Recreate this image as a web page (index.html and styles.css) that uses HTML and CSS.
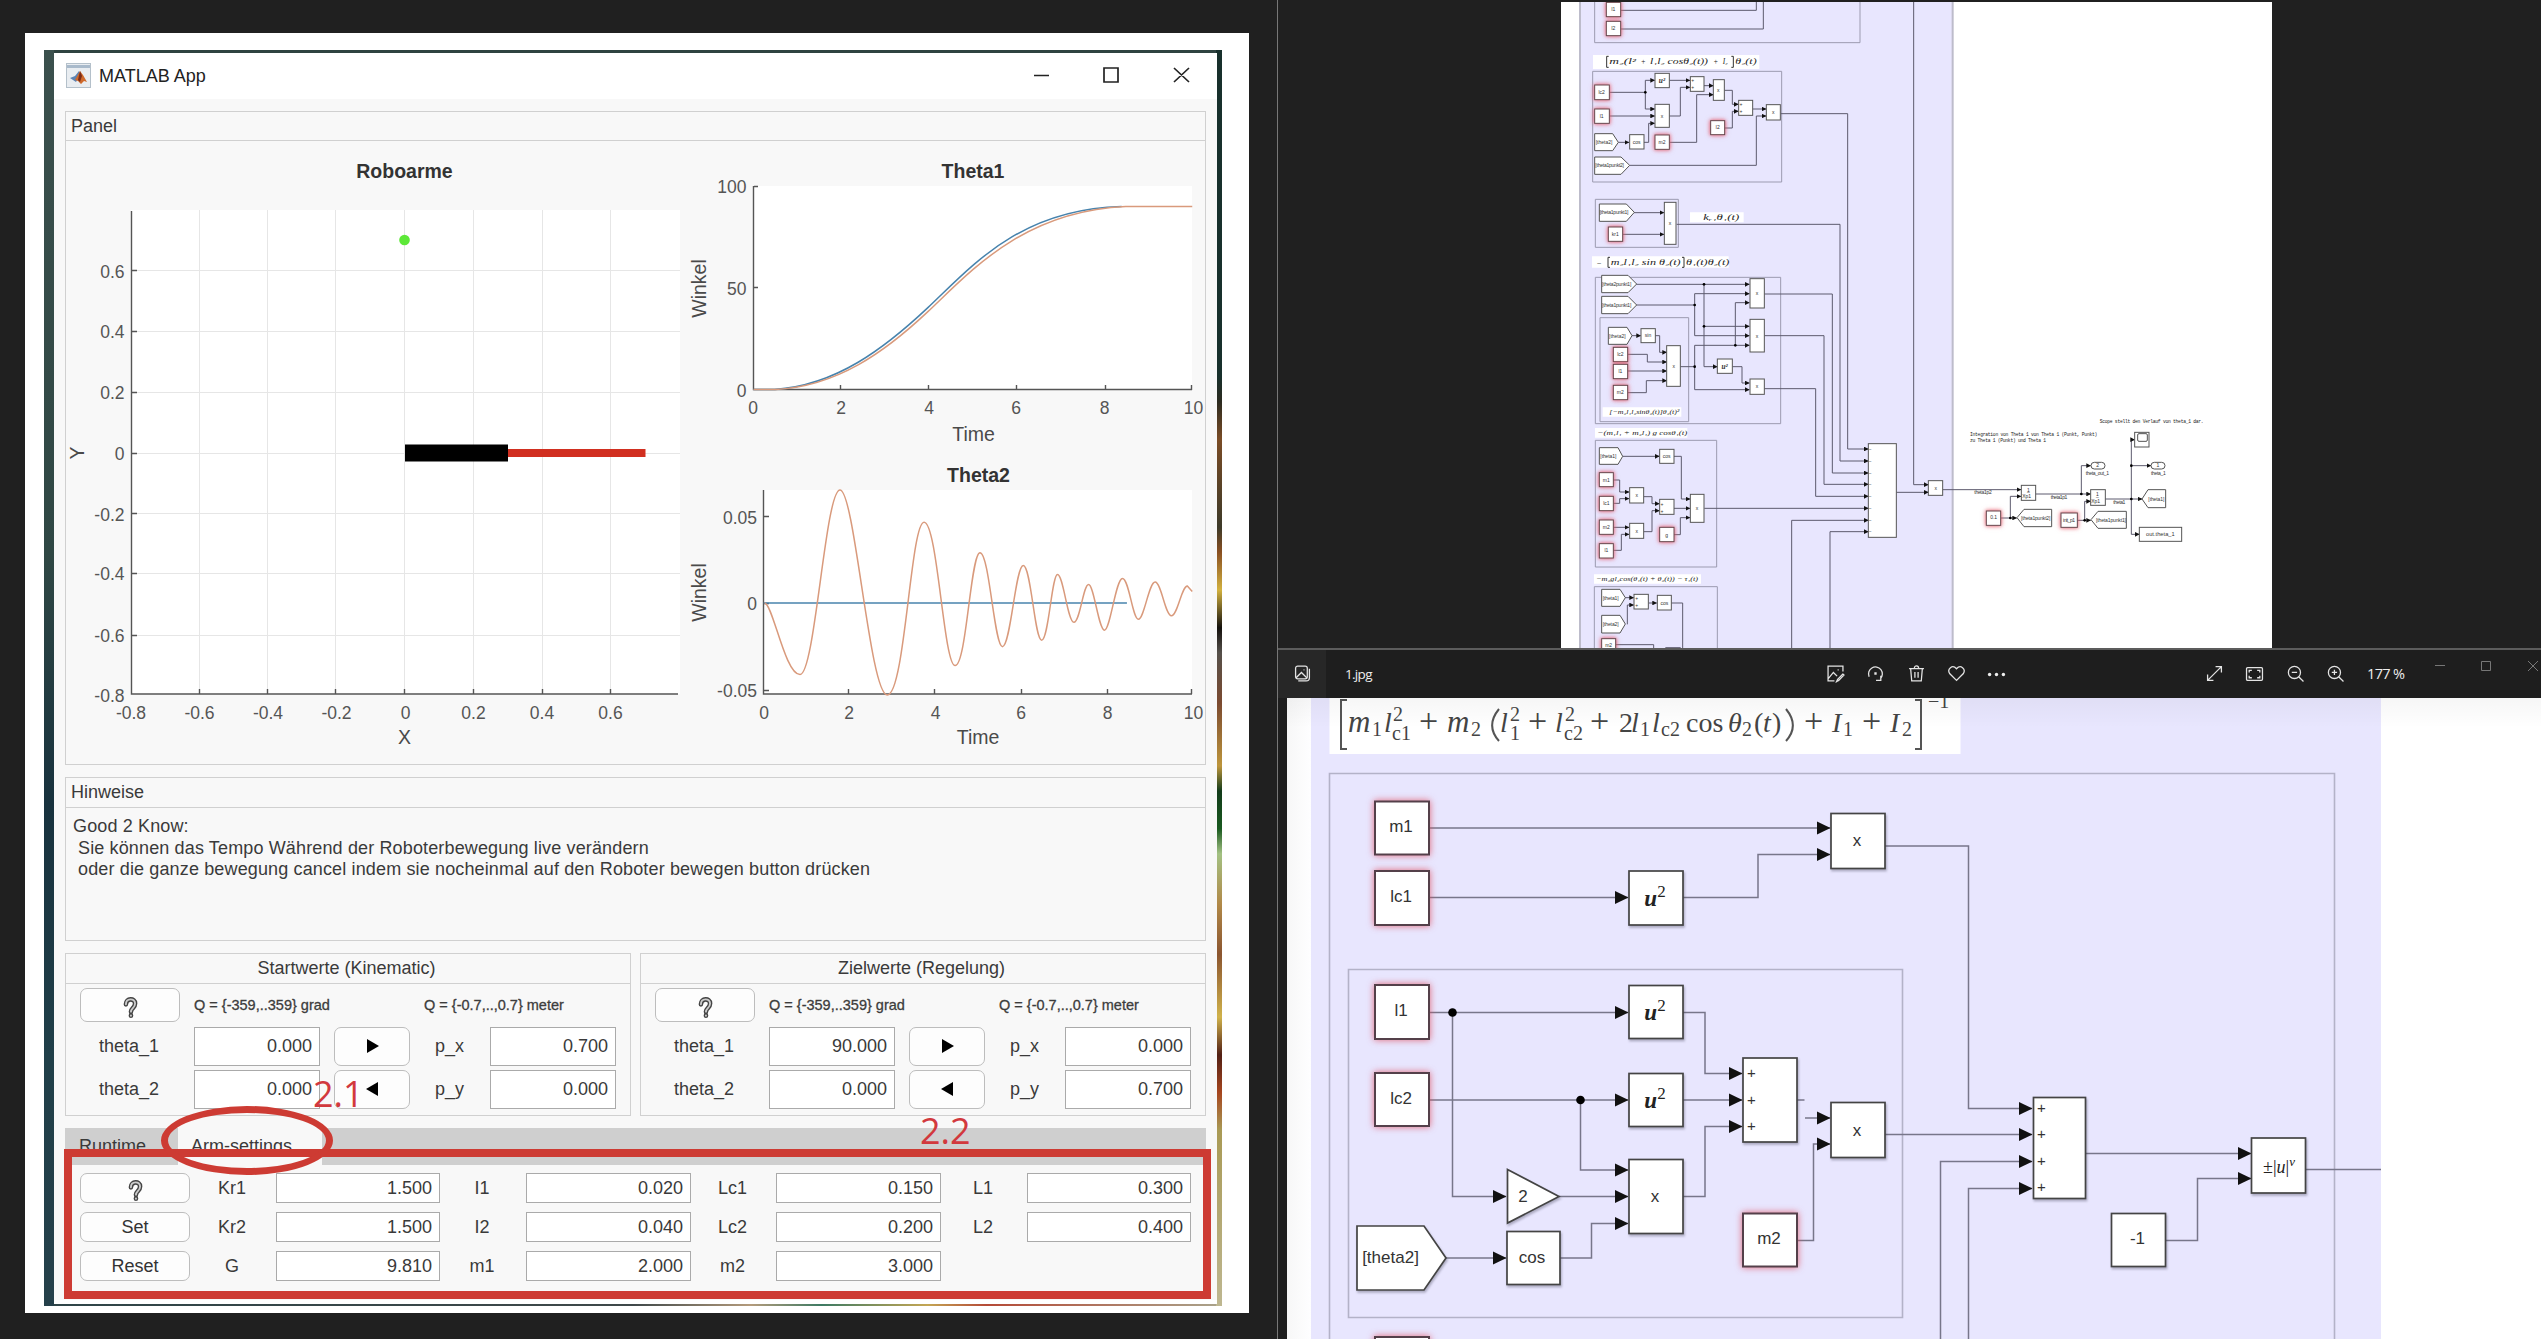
FILE: index.html
```html
<!DOCTYPE html>
<html lang="de">
<head>
<meta charset="utf-8">
<title>MATLAB App</title>
<link rel="stylesheet" href="styles.css">
</head>
<body>
<div class="desktop">
<section class="viewer viewer-app">
<div class="photo">
<div class="wallpaper">
<div class="window">
  <header class="titlebar">
    <svg class="logo" viewBox="0 0 25 25"><rect x=".5" y=".5" width="24" height="24" fill="#e9edf1" stroke="#b4c0ca"/><path d="M1 2h23v3H1z" fill="#a9bacb"/><path d="M4 15l5-2 4-5 1 4-4 7-3-2z" fill="#5b83b3"/><path d="M9 17l5-9 3 4 4 7-3-1-3 3-3-3z" fill="#cf6a2c"/><path d="M14 8l2 5-2 6-2-2z" fill="#7c2c18"/></svg>
    <span class="app-name">MATLAB App</span>
    <svg class="win-controls" viewBox="0 0 156 16"><path d="M0 8.500h15M70 1h14v14H70zM140 1l15 14M155 1l-15 14" fill="none" stroke="#222" stroke-width="1.700"/></svg>
  </header>
  <main class="app">
    <section class="panel plots">
      <h2>Panel</h2>
      <svg class="charts" viewBox="66 141 1139 623">
        <g class="area"><path d="M131 210H680V694H131zM753 186H1192V390H753zM764 490H1192V694H764z"/></g>
        <path class="grid" d="M199.500 210V694M267.500 210V694M335.500 210V694M404.500 210V694M473.500 210V694M542.500 210V694M610.500 210V694M131 270.500H680M131 331.500H680M131 392.500H680M131 453.500H680M131 513.500H680M131 573.500H680M131 635.500H680"/>
        <path class="axis" d="M131.500 211V694H678M132 270.500h5M132 331.500h5M132 392.500h5M132 453.500h5M132 513.500h5M132 573.500h5M132 635.500h5M199.500 694v-5M267.500 694v-5M335.500 694v-5M404.500 694v-5M473.500 694v-5M542.500 694v-5M610.500 694v-5"/>
        <circle cx="404.500" cy="240" r="5.300" fill="#5de838"/>
        <path d="M508 449H645.500V457H508z" fill="#d12f20"/><path d="M405 444.500H508V461.500H405z"/>
        <g class="title"><text x="404.500" y="178">Roboarme</text><text x="973" y="178">Theta1</text><text x="978.500" y="482">Theta2</text></g>
        <g class="tick end"><text x="124.500" y="278">0.6</text><text x="124.500" y="338">0.4</text><text x="124.500" y="399">0.2</text><text x="124.500" y="460">0</text><text x="124.500" y="520.500">-0.2</text><text x="124.500" y="580">-0.4</text><text x="124.500" y="641.500">-0.6</text><text x="124.500" y="702">-0.8</text>
          <text x="746.500" y="193">100</text><text x="746.500" y="295">50</text><text x="746.500" y="397">0</text><text x="757" y="523.500">0.05</text><text x="757" y="610">0</text><text x="757" y="697">-0.05</text></g>
        <g class="tick mid"><text x="131" y="719">-0.8</text><text x="199.500" y="719">-0.6</text><text x="268" y="719">-0.4</text><text x="336.500" y="719">-0.2</text><text x="405.500" y="719">0</text><text x="473.500" y="719">0.2</text><text x="542" y="719">0.4</text><text x="610.500" y="719">0.6</text>
          <text x="753" y="414">0</text><text x="841" y="414">2</text><text x="929" y="414">4</text><text x="1016" y="414">6</text><text x="1104.500" y="414">8</text><text x="1193.500" y="414">10</text>
          <text x="764" y="719">0</text><text x="849" y="719">2</text><text x="935.500" y="719">4</text><text x="1021" y="719">6</text><text x="1107.500" y="719">8</text><text x="1193.500" y="719">10</text></g>
        <g class="label"><text x="404.500" y="744">X</text><text transform="translate(84 453) rotate(-90)">Y</text><text x="973.500" y="441">Time</text><text x="978" y="744">Time</text><text transform="translate(706 288.500) rotate(-90)">Winkel</text><text transform="translate(706 592.500) rotate(-90)">Winkel</text></g>
        <path class="axis" d="M753.500 186V389.500H1192M754 186.500h4M754 287.500h4M840.500 390v-5M928.500 390v-5M1016.500 390v-5M1105.500 390v-5M1191.500 390v-5M763.500 490V694H1192M764 516.500h5M764 603.500h5M764 690.500h5M848.500 694v-5M934.500 694v-5M1021.500 694v-5M1107.500 694v-5M1191.500 694v-5"/>
        <g class="curves" transform="translate(640 0) scale(.40816 .49744)">
          <path class="blue" d="M278 783H330C480 775 600 700 706 618S930 420 1180 415"/>
          <path class="orange" d="M278 783H332C482 777 600 708 706 626S940 424 1190 415H1353"/>
          <path class="blue" d="M303 1212H1193"/>
          <path class="orange" d="M305 1212C325 1212 355 1356 392 1356S454 985 490 985S563 1397 606 1397S663 1050 696 1050S744 1338 772 1338S810 1111 833 1111S868 1300 888 1300S920 1137 939 1137S967 1287 984 1287S1009 1155 1023 1155S1048 1251 1063 1251S1086 1175 1099 1175S1124 1267 1138 1267S1166 1163 1182 1163S1207 1245 1221 1245S1247 1170 1262 1170S1287 1238 1302 1238S1327 1178 1341 1178L1353 1189"/>
        </g>
      </svg>
    </section>
    <section class="panel hints">
      <h2>Hinweise</h2>
      <p>Good 2 Know:</p>
      <p class="in">Sie können das Tempo Während der Roboterbewegung live verändern</p>
      <p class="in">oder die ganze bewegung cancel indem sie nocheinmal auf den Roboter bewegen button drücken</p>
    </section>
    <div class="values">
      <section class="panel">
        <h2 class="center">Startwerte (Kinematic)</h2>
        <div class="pose">
          <span class="button help"><svg viewBox="0 0 16 24"><path d="M3 8C3 1 13 1 13 7C13 12 8.500 12 8.500 16M8.500 20v.5"/><path class="inner" d="M3 8C3 1 13 1 13 7C13 12 8.500 12 8.500 16M8.500 20v.5"/></svg></span>
          <span class="range">Q = {-359,..359} grad</span><span class="range second">Q = {-0.7,..,0.7} meter</span>
          <label>theta_1</label><span class="field">0.000</span><span class="button arrow"><svg viewBox="0 0 13 14"><path d="M1 0L13 7L1 14z"/></svg></span><span>p_x</span><span class="field">0.700</span>
          <label>theta_2</label><span class="field">0.000</span><span class="button arrow"><svg viewBox="0 0 13 14"><path d="M12 0L0 7L12 14z"/></svg></span><span>p_y</span><span class="field">0.000</span>
        </div>
      </section>
      <section class="panel">
        <h2 class="center">Zielwerte (Regelung)</h2>
        <div class="pose">
          <span class="button help"><svg viewBox="0 0 16 24"><path d="M3 8C3 1 13 1 13 7C13 12 8.500 12 8.500 16M8.500 20v.5"/><path class="inner" d="M3 8C3 1 13 1 13 7C13 12 8.500 12 8.500 16M8.500 20v.5"/></svg></span>
          <span class="range">Q = {-359,..359} grad</span><span class="range second">Q = {-0.7,..,0.7} meter</span>
          <label>theta_1</label><span class="field">90.000</span><span class="button arrow"><svg viewBox="0 0 13 14"><path d="M1 0L13 7L1 14z"/></svg></span><span>p_x</span><span class="field">0.000</span>
          <label>theta_2</label><span class="field">0.000</span><span class="button arrow"><svg viewBox="0 0 13 14"><path d="M12 0L0 7L12 14z"/></svg></span><span>p_y</span><span class="field">0.700</span>
        </div>
      </section>
    </div>
    <div class="tabs">
      <nav><span class="tab">Runtime</span><span class="tab active">Arm-settings</span></nav>
      <div class="settings">
        <span class="button help"><svg viewBox="0 0 16 24"><path d="M3 8C3 1 13 1 13 7C13 12 8.500 12 8.500 16M8.500 20v.5"/><path class="inner" d="M3 8C3 1 13 1 13 7C13 12 8.500 12 8.500 16M8.500 20v.5"/></svg></span><label>Kr1</label><span class="field">1.500</span><label>I1</label><span class="field">0.020</span><label>Lc1</label><span class="field">0.150</span><label>L1</label><span class="field">0.300</span>
        <span class="button">Set</span><label>Kr2</label><span class="field">1.500</span><label>I2</label><span class="field">0.040</span><label>Lc2</label><span class="field">0.200</span><label>L2</label><span class="field">0.400</span>
        <span class="button">Reset</span><label>G</label><span class="field">9.810</span><label>m1</label><span class="field">2.000</span><label>m2</label><span class="field">3.000</span>
      </div>
    </div>
  </main>
  <div class="mark-box"></div><div class="mark-ring"></div>
  <span class="mark-text first">2.1</span><span class="mark-text second">2.2</span>
</div>
</div>
</div>
</section>

<div class="right">
<section class="viewer viewer-model">
<svg class="model" viewBox="33 6 2133 1938">
  <defs>
    <marker id="tip" markerUnits="userSpaceOnUse" markerWidth="14" markerHeight="14" refX="13" refY="7" orient="auto"><path d="M0 0L14 7L0 14z"/></marker>
  </defs>
  <path d="M33 0H2166V1950H33z" fill="#fff"/>
  <path d="M90 0H1208V1950H90z" fill="#e8e6fe"/><path d="M90 0V1950M1208 0V1950" stroke="#bdbccb" stroke-width="6"/>
  <g class="frames">
    <path d="M134 0V128H930V0M128 214H695V546H128zM136 598H385V742H136zM136 832H692V1271H136zM150 953H416V1265H150zM136 1321H500V1701H136zM133 1950V1760H502V1950"/>
  </g>
  <g class="paper"><path d="M129 165H628V207H129zM420 637H581V667H420zM126 769H536V803H126zM158 1222H394V1250H158zM135 1284H412V1313H135zM132 1723H453V1751H132z"/></g>
  <g class="math">
    <path d="M176 169H170V202H176M544 169H550V202H544M180 772H174V802H180M396 772H402V802H396"/>
    <text x="178" y="192" textLength="80" lengthAdjust="spacingAndGlyphs">m₂(l²</text><text x="272" y="192">+</text><text x="300" y="192" textLength="174" lengthAdjust="spacingAndGlyphs">l₁l₂ cosθ₂(t))</text><text x="490" y="192">+</text><text x="518" y="192">I₂</text><text x="556" y="192" textLength="64" lengthAdjust="spacingAndGlyphs">θ₂(t)</text>
    <text x="460" y="660" textLength="108" lengthAdjust="spacingAndGlyphs">kᵣ₁θ₁(t)</text>
    <text x="142" y="794">–</text><text x="182" y="794" textLength="210" lengthAdjust="spacingAndGlyphs">m₂l₁l₂ sin θ₂(t)</text><text x="408" y="794" textLength="130" lengthAdjust="spacingAndGlyphs">θ₁(t)θ₂(t)</text>
    <text x="178" y="1243" class="s" textLength="210" lengthAdjust="spacingAndGlyphs">[−m₂l₁l₂sinθ₂(t)]θ₂(t)²</text>
    <text x="142" y="1305" class="s" textLength="270" lengthAdjust="spacingAndGlyphs">−(m₁l₁ + m₂l₁) g cosθ₁(t)</text>
    <text x="138" y="1743" class="s" textLength="306" lengthAdjust="spacingAndGlyphs">−m₂gl₂cos(θ₁(t) + θ₂(t)) − τ₁(t)</text>
  </g>
  <g class="wires">
    <path d="M212 31H619V0M212 87H640V0"/>
    <g class="to"><path d="M178 277H286V241H314"/><path d="M286 277V327H314"/><path d="M178 348H314"/><path d="M205 427H237"/><path d="M281 427H296V370H314"/><path d="M358 241H420"/><path d="M358 348H391V262H420"/><path d="M462 257H490"/><path d="M358 427H440V284H490"/><path d="M523 271H547V313H565"/><path d="M523 384H547V334H565"/><path d="M608 327H648"/><path d="M239 496H619V348H648"/>
      <path d="M252 638H342"/><path d="M218 703H342"/>
      <path d="M259 853H598"/><path d="M259 915H434V881H598"/><path d="M434 915V1007H598"/><path d="M462 853V979H598"/><path d="M556 1036V908H598"/><path d="M391 1100H434V1036H598"/><path d="M434 1100V1169H598"/><path d="M462 979V1100H502"/><path d="M547 1100H576V1149H598"/><path d="M245 1007H272"/><path d="M315 1007H329V1057H350"/><path d="M233 1063H292V1086H350"/><path d="M233 1113H350"/><path d="M233 1178H289V1142H350"/>
      <path d="M218 1369H328"/><path d="M372 1369H394V1497H420"/><path d="M190 1440H209V1476H237"/><path d="M190 1510H209V1496H237"/><path d="M190 1582H237"/><path d="M190 1651H214V1603H237"/><path d="M281 1490H306V1511H328"/><path d="M281 1595H306V1532H328"/><path d="M372 1525H420"/><path d="M372 1604H391V1553H420"/>
      <path d="M225 1793H251"/><path d="M232 1873V1815H251"/><path d="M296 1809H320"/>
      <path d="M692 341H893V1347H955"/><path d="M380 673H870V1383H955"/><path d="M643 882H847V1419H955"/><path d="M643 1007H822V1453H955"/><path d="M643 1166H797V1489H955"/><path d="M463 1525H955"/><path d="M725 1950V1561H955"/><path d="M840 1950V1595H955"/>
      <path d="M1091 0V1454H1135"/><path d="M1039 1477H1135"/>
      <path d="M1178 1469H1413"/><path d="M1352 1554H1400"/><path d="M1381 1554V1489H1413"/><path d="M1457 1482H1622"/><path d="M1594 1482V1397H1622"/><path d="M1582 1561H1622"/><path d="M1604 1561V1504H1622"/><path d="M1665 1497H1776"/><path d="M1744 1497V1319H1754"/><path d="M1744 1397H1803"/><path d="M1744 1497V1603H1768"/>
    </g>
    <path d="M364 1809H398V1950M197 1934H311V1950"/>
    <g class="dot"><circle cx="286" cy="277" r="4"/><circle cx="462" cy="853" r="4"/><circle cx="434" cy="915" r="4"/><circle cx="462" cy="979" r="4"/><circle cx="556" cy="1036" r="4"/><circle cx="434" cy="1100" r="4"/><circle cx="1381" cy="1554" r="4"/><circle cx="1594" cy="1482" r="4"/><circle cx="1604" cy="1561" r="4"/><circle cx="1744" cy="1497" r="4"/><circle cx="1744" cy="1397" r="4"/></g>
  </g>
  <g class="glow">
    <rect x="169" y="7" width="43" height="43"/><rect x="169" y="64" width="43" height="43"/><rect x="134" y="255" width="44" height="44"/><rect x="134" y="327" width="44" height="43"/><rect x="315" y="405" width="43" height="43"/><rect x="482" y="362" width="42" height="42"/><rect x="175" y="681" width="43" height="43"/>
    <rect x="190" y="1042" width="43" height="43"/><rect x="190" y="1093" width="43" height="43"/><rect x="190" y="1156" width="43" height="43"/>
    <rect x="148" y="1418" width="42" height="42"/><rect x="148" y="1489" width="42" height="43"/><rect x="148" y="1560" width="42" height="43"/><rect x="148" y="1631" width="42" height="43"/><rect x="329" y="1582" width="43" height="43"/><rect x="155" y="1916" width="42" height="43"/>
    <rect x="1309" y="1533" width="43" height="43"/><rect x="1533" y="1539" width="49" height="43"/>
  </g>
  <g class="blocks">
    <rect x="315" y="220" width="43" height="43"/><rect x="315" y="313" width="43" height="69"/><rect x="239" y="404" width="43" height="43"/><rect x="421" y="230" width="41" height="44"/><rect x="490" y="239" width="33" height="62"/><rect x="566" y="301" width="42" height="45"/><rect x="649" y="314" width="42" height="46"/>
    <path d="M134 401H188L205 427L188 452H134zM134 471H213L239 496L213 523H134zM148 612H229L253 637L229 664H148zM155 826H234L260 852L234 878H155zM155 889H234L260 915L234 941H155zM175 982H231L246 1007L231 1033H175zM148 1343H204L218 1369L204 1393H148zM155 1768H210L226 1793L210 1819H155zM155 1846H210L226 1872L210 1899H155z"/>
    <rect x="343" y="607" width="35" height="126"/>
    <rect x="600" y="836" width="43" height="88"/><rect x="600" y="958" width="43" height="98"/><rect x="600" y="1137" width="43" height="46"/><rect x="502" y="1077" width="45" height="43"/><rect x="273" y="986" width="43" height="42"/><rect x="350" y="1037" width="41" height="122"/>
    <rect x="329" y="1348" width="43" height="42"/><rect x="239" y="1463" width="42" height="46"/><rect x="239" y="1570" width="42" height="45"/><rect x="329" y="1498" width="43" height="45"/><rect x="421" y="1483" width="41" height="84"/>
    <rect x="252" y="1783" width="43" height="44"/><rect x="322" y="1786" width="42" height="44"/>
    <rect x="955" y="1331" width="84" height="281"/><rect x="1135" y="1442" width="43" height="44"/>
    <rect x="1414" y="1456" width="43" height="45"/><rect x="1622" y="1469" width="44" height="47"/><rect x="1754" y="1297" width="43" height="44"/><rect x="1763" y="1301" width="29" height="23" rx="4"/><rect x="1623" y="1387" width="42" height="20" rx="10"/><rect x="1803" y="1387" width="42" height="20" rx="10"/><rect x="1768" y="1582" width="127" height="42"/>
    <path d="M1401 1553L1422 1528H1505V1580H1422zM1623 1559L1644 1534H1729V1585H1644zM1776 1497L1794 1469H1847V1523H1794z"/>
  </g>
  <path class="wires" d="M346 1943H392"/>
  <g class="names">
    <text x="190" y="34">I1</text><text x="190" y="91">I2</text><text x="155" y="282">lc2</text><text x="155" y="354">l1</text><text x="336" y="432">m2</text><text x="503" y="388">I2</text><text x="196" y="707">kr1</text><text x="211" y="1068">lc2</text><text x="211" y="1119">l1</text><text x="211" y="1183">m2</text><text x="169" y="1445">m1</text><text x="169" y="1516">lc1</text><text x="169" y="1587">m2</text><text x="169" y="1657">l1</text><text x="350" y="1610">g</text><text x="176" y="1941">m2</text>
    <text x="336" y="249" class="u">u²</text><text x="524" y="1108" class="u">u²</text><text x="336" y="353">x</text><text x="505" y="276">x</text><text x="670" y="343">x</text><text x="260" y="431">cos</text><text x="360" y="676">x</text><text x="621" y="886">x</text><text x="621" y="1013">x</text><text x="621" y="1165">x</text><text x="294" y="1012">sin</text><text x="371" y="1105">x</text><text x="350" y="1374">cos</text><text x="260" y="1491">x</text><text x="260" y="1598">x</text><text x="441" y="1531">x</text><text x="343" y="1815">cos</text><text x="1157" y="1471">x</text>
    <text x="428" y="246">+</text><text x="428" y="268">+</text><text x="573" y="319">+</text><text x="573" y="340">+</text><text x="336" y="1518">+</text><text x="336" y="1538">+</text><text x="260" y="1799">+</text><text x="260" y="1821">+</text>
    <text x="961" y="1352">−</text><text x="961" y="1388">−</text><text x="961" y="1424">−</text><text x="961" y="1458">−</text><text x="961" y="1494">−</text><text x="961" y="1530">−</text><text x="961" y="1566">−</text><text x="961" y="1600">−</text>
    <text x="162" y="432" textLength="50">[theta2]</text><text x="179" y="502" textLength="86">[theta1punkt2]</text><text x="192" y="643" textLength="86">[theta1punkt1]</text><text x="200" y="858" textLength="88">[theta2punkt1]</text><text x="200" y="921" textLength="88">[theta1punkt1]</text><text x="202" y="1013" textLength="50">[theta2]</text><text x="175" y="1374" textLength="48">[theta1]</text><text x="182" y="1799" textLength="48">[theta1]</text><text x="182" y="1878" textLength="48">[theta2]</text>
    <text x="1331" y="1558">0.1</text><text x="1557" y="1565" textLength="36">init_p1</text><text x="1457" y="1559" textLength="88">[theta1punkt2]</text><text x="1683" y="1567" textLength="90">[theta1punkt1]</text><text x="1819" y="1502" textLength="48">[theta1]</text><text x="1831" y="1609" class="b" textLength="86">out.theta_1</text>
    <text x="1435" y="1475">1</text><text x="1435" y="1483">–</text><text x="1430" y="1495">Xp1</text><text x="1642" y="1488">1</text><text x="1642" y="1497">–</text><text x="1637" y="1509">Xp1</text><text x="1643" y="1402">2</text><text x="1824" y="1402">1</text><text x="1642" y="1424" textLength="70">theta_out_1</text><text x="1825" y="1424" textLength="44">theta_1</text><text x="1299" y="1483" textLength="52">theta1p2</text><text x="1527" y="1498" textLength="50">theta1p1</text><text x="1708" y="1512" textLength="36">theta1</text>
  </g>
  <g class="notes"><text x="1260" y="1307" textLength="382">Integration von Theta 1 von Theta 1 (Punkt, Punkt)</text><text x="1260" y="1325" textLength="228">zu Theta 1 (Punkt) und Theta 1</text><text x="1649" y="1270" textLength="312">Scope stellt den Verlauf von theta_1 dar.</text></g>
</svg>
</section>

<section class="viewer viewer-photo">
  <header class="toolbar">
    <span class="gallery"><svg class="ico" viewBox="0 0 16 16"><rect x="1.500" y="1" width="11" height="12" rx="2"/><path d="M2 12l5-5 5 5M9 4.500h.8M14.500 3.500V12a3 3 0 0 1-3 3H4"/></svg></span>
    <span class="file">1.jpg</span>
    <div class="tools">
      <svg class="ico" viewBox="0 0 16 16"><path d="M15 6V1H1v14h6M1 13l5-6 3.500 3.500M10 4.500h1M15 8.500l-5 5-1 2 2-1 5-5z"/></svg>
      <svg class="ico" viewBox="0 0 16 16"><path d="M2 11A6.500 6.500 0 1 1 12.500 13M8.500 14.500h4.500v-4.500M7.500 7.500h1v1h-1z"/></svg>
      <svg class="ico" viewBox="0 0 16 16"><path d="M1 3.500h14M6 3c0-3 4-3 4 0M2.500 3.500L3.500 15h9l1-11.500M6.500 6.500v5.500M9.500 6.500v5.500"/></svg>
      <svg class="ico" viewBox="0 0 16 16"><path d="M8 14.500L1.500 8C-1 4 4-1 8 3.500C12-1 17 4 14.500 8z"/></svg>
      <svg class="ico" viewBox="0 0 16 16"><g fill="#eee" stroke="none"><circle cx="1.500" cy="9" r="1.600"/><circle cx="8" cy="9" r="1.600"/><circle cx="14.500" cy="9" r="1.600"/></g></svg>
    </div>
    <div class="zooms">
      <svg class="ico" viewBox="0 0 16 16"><path d="M1.500 14.500l13-13M9 1.500h5.500V7M1.500 9v5.500H7"/></svg>
      <svg class="ico" viewBox="0 0 16 16"><rect x=".5" y="2.500" width="15" height="12" rx="1"/><path d="M3 7V5h2.500M10.500 5H13v2M13 10v2h-2.500M5.500 12H3v-2"/></svg>
      <svg class="ico" viewBox="0 0 16 16"><circle cx="7" cy="7" r="5.700"/><path d="M11 11l4.500 4.500M4.500 7h5"/></svg>
      <svg class="ico" viewBox="0 0 16 16"><circle cx="7" cy="7" r="5.700"/><path d="M11 11l4.500 4.500M4.500 7h5M7 4.500v5"/></svg>
    </div>
    <span class="percent">177 %</span>
    <svg class="caption" viewBox="0 0 104 12"><path d="M0 5.500h10M46.500 1.500h9v9h-9zM93 1l10 10M103 1L93 11"/></svg>
  </header>
  <svg class="detail" viewBox="1287 698 1254 641">
    <defs>
      <marker id="head" markerUnits="userSpaceOnUse" markerWidth="14" markerHeight="14" refX="13" refY="7" orient="auto"><path d="M0 .5L13.500 7L0 13.500z"/></marker>
      <linearGradient id="edge" x1="0" x2="1"><stop offset="0" stop-color="#f7f7f7"/><stop offset="1" stop-color="#fefeff"/></linearGradient>
      <linearGradient id="shade" x1="0" x2="0" y1="0" y2="1"><stop offset="0" stop-color="#000" stop-opacity=".035"/><stop offset="1" stop-color="#000" stop-opacity="0"/></linearGradient>
    </defs>
    <path d="M1287 698H2541V1339H1287z" fill="#fff"/><path d="M1287 698H1311V1339H1287z" fill="url(#edge)"/><path d="M1311 698H2381V1339H1311z" fill="#e8e6fe"/>
    <path d="M1329.500 698H1960.500V754H1329.500z" fill="#fff"/>
    <path class="frame" d="M1329.500 1345V773.500H2334.500V1345M1348.500 969.500H1902.500V1317.500H1348.500z"/>
    <g class="formula">
      <path d="M1347 700H1341V749H1347M1915 700H1921V749H1915"/>
      <text y="732"><tspan x="1348" class="i m">m</tspan><tspan x="1384" class="i">l</tspan><tspan x="1419" class="p">+</tspan><tspan x="1447" class="i m">m</tspan><tspan x="1500" class="i">l</tspan><tspan x="1528" class="p">+</tspan><tspan x="1555" class="i">l</tspan><tspan x="1590" class="p">+</tspan><tspan x="1619">2</tspan><tspan x="1631" class="i">l</tspan><tspan x="1652" class="i">l</tspan><tspan x="1686">cos</tspan><tspan x="1728" class="i">θ</tspan><tspan x="1754">(</tspan><tspan x="1763" class="i">t</tspan><tspan x="1772">)</tspan><tspan x="1804" class="p">+</tspan><tspan x="1832" class="i">I</tspan><tspan x="1862" class="p">+</tspan><tspan x="1890" class="i">I</tspan></text>
      <path class="paren" d="M1499 709C1490 720 1490 731 1499 741M1786 709C1795 720 1795 731 1786 741"/>
      <text class="sub"><tspan x="1372" y="736">1</tspan><tspan x="1393" y="721">2</tspan><tspan x="1392" y="740">c1</tspan><tspan x="1471" y="736">2</tspan><tspan x="1510" y="721">2</tspan><tspan x="1510" y="740">1</tspan><tspan x="1565" y="721">2</tspan><tspan x="1564" y="740">c2</tspan><tspan x="1640" y="736">1</tspan><tspan x="1661" y="736">c2</tspan><tspan x="1742" y="736">2</tspan><tspan x="1843" y="736">1</tspan><tspan x="1902" y="736">2</tspan><tspan x="1928" y="708">−1</tspan></text>
    </g>
    <g class="lines">
      <g class="into">
        <path d="M1429 828H1830"/><path d="M1429 897.500H1628"/><path d="M1683 897.500H1758V854.500H1830"/><path d="M1885 846H1968.500V1108.500H2032"/>
        <path d="M1429 1012.500H1628"/><path d="M1452.500 1012.500V1196.500H1506"/><path d="M1429 1100H1628"/><path d="M1580.500 1100V1170H1628"/><path d="M1559 1196.500H1628"/><path d="M1446 1258H1506"/><path d="M1560 1258H1591.500V1223.500H1628"/>
        <path d="M1683 1012.500H1705V1073.500H1742"/><path d="M1683 1100H1742"/><path d="M1683 1196.500H1705V1126.500H1742"/><path d="M1805 1118H1830"/><path d="M1797 1240.500H1813.500V1144H1830"/>
        <path d="M1885 1134.500H2032"/><path d="M1940.500 1345V1161.500H2032"/><path d="M1968.500 1345V1188.500H2032"/><path d="M2086 1153.500H2251"/><path d="M2165 1240.500H2197.500V1178.500H2251"/>
      </g>
      <path d="M1797 1100H1804.500M2306 1169.500H2381"/>
      <circle cx="1452.500" cy="1012.500" r="4.300"/><circle cx="1580.500" cy="1100" r="4.300"/>
    </g>
    <g class="halo"><rect x="1375" y="801.500" width="54" height="53"/><rect x="1375" y="871" width="54" height="54"/><rect x="1375" y="985" width="54" height="54"/><rect x="1375" y="1073" width="54" height="53"/><rect x="1743" y="1213.500" width="54" height="53"/><rect x="1375" y="1337" width="54" height="53"/></g>
    <g class="cards">
      <rect x="1629" y="871" width="54" height="54"/><rect x="1831" y="813.500" width="54" height="55"/><rect x="1629" y="985.500" width="54" height="53"/><rect x="1629" y="1073.500" width="54" height="53"/><rect x="1629" y="1159.500" width="54" height="74"/><rect x="1743" y="1058" width="54" height="84"/><rect x="1831" y="1102.500" width="54" height="55"/><rect x="1507" y="1231.500" width="53" height="53"/><rect x="2033.500" y="1097.500" width="52" height="101"/><rect x="2251.500" y="1138" width="54" height="55"/><rect x="2111.500" y="1213.500" width="54" height="53"/>
      <path d="M1507.500 1169.500L1559 1196.500L1507.500 1223zM1357 1226H1424L1446 1258L1424 1290H1357z"/>
    </g>
    <g class="tags"><text x="1401" y="832">m1</text><text x="1401" y="902">lc1</text><text x="1401" y="1016">l1</text><text x="1401" y="1104">lc2</text><text x="1769" y="1244">m2</text>
      <text x="1857" y="846">x</text><text x="1857" y="1136">x</text><text x="1655" y="1202">x</text><text x="1523" y="1202">2</text><text x="1532" y="1263">cos</text><text x="1390.500" y="1263">[theta2]</text><text x="2137.500" y="1244">-1</text>
      <g class="plus"><text x="1751.500" y="1078">+</text><text x="1751.500" y="1105">+</text><text x="1751.500" y="1131">+</text><text x="2041.500" y="1113">+</text><text x="2041.500" y="1139">+</text><text x="2041.500" y="1166">+</text><text x="2041.500" y="1192">+</text></g>
      <g class="pow"><text x="1655" y="906">u<tspan class="e" dy="-9">2</tspan></text><text x="1655" y="1020">u<tspan class="e" dy="-9">2</tspan></text><text x="1655" y="1108">u<tspan class="e" dy="-9">2</tspan></text><text class="sp" x="2279" y="1173"><tspan class="r">±|</tspan>u<tspan class="r">|</tspan><tspan class="v" dy="-7">v</tspan></text></g>
    </g>
    <path d="M1287 698H2541V728H1287z" fill="url(#shade)"/>
  </svg>
</section>
</div>
</div>
</body>
</html>
```
FILE: styles.css
```css
* { box-sizing: border-box; }
body { margin: 0; background: #202020; font: 18px "Liberation Sans", Arial, sans-serif; color: #3a3a3a; overflow: hidden; }
h2, p { margin: 0; font-size: 18px; font-weight: 400; }
svg { display: block; }
.desktop { display: flex; width: 2541px; height: 1339px; }
.viewer-app { width: 1277px; padding: 33px 0 0 25px; background: #202020; }
.photo { width: 1224px; height: 1280px; padding: 17px 27px 7px 19px; background: #fff; }
.wallpaper { width: 1178px; height: 1256px; padding: 3px 5px 2px 10px;
  background:
    linear-gradient(#3b504d, #2f4744 40%, #18323e 60%, #203f49 80%, #25404a) left / 10px 100% no-repeat,
    linear-gradient(#18302c 0 26%, #2c2b20 28%, #7a4c26 31%, #3d3a29 38%, #8a5022 40%, #d2b13f 43%, #14110d 46%, #55504a 48%, #7b4a30 52%, #bd953c 57%, #123b1a 59%, #1a5a20 62%, #a3c183 64%, #b18948 68%, #8b5530 72%, #d0b24b 77%, #511f14 80%, #a6461f 83%, #a99a55 86%, #beb791 100%) right / 6px 100% no-repeat,
    linear-gradient(90deg, #2f4548, #3f484a 50%, #b49b7c 60%, #3d7a63 66%, #c4a654 75%, #b54a37 80%, #a9a48c) bottom / 100% 3px no-repeat,
    #2f4340; }
.window { position: relative; height: 1251px; background: #fff; }
.titlebar { display: flex; align-items: center; height: 46px; padding: 0 27px 2px 12px; }
.logo { width: 25px; height: 25px; margin-right: 8px; }
.app-name { flex: 1; padding-top: 2px; color: #222; }
.win-controls { width: 156px; height: 16px; }
.app { display: flex; flex-direction: column; gap: 12px; height: 1201px; padding: 12px 11px 0; background: #f8f8f8; }
.panel { border: 1px solid #d0d0d0; }
.panel h2 { height: 30px; padding: 1px 5px 0; line-height: 26px; border-bottom: 1px solid #d0d0d0; }
.panel h2.center { text-align: center; padding-right: 8px; }
.plots { height: 654px; }
.plots h2 { height: 29px; }
.charts { width: 1139px; height: 623px; }
.area { fill: #fff; }
.grid { stroke: #e6e6e6; }
.axis { fill: none; stroke: #555; stroke-width: 1.4; }
.charts text { fill: #555; font-size: 17.500px; }
.charts .title text { fill: #333; font-size: 19.500px; font-weight: 700; text-anchor: middle; }
.charts .label text { font-size: 19.500px; text-anchor: middle; fill: #4a4a4a; }
.end { text-anchor: end; }
.mid { text-anchor: middle; }
.curves path { fill: none; stroke-width: 1.5; vector-effect: non-scaling-stroke; }
.curves .blue { stroke: #4783ad; }
.curves .orange { stroke: #d99a7c; }
.hints { height: 164px; }
.hints h2 { margin-bottom: 8px; }
.hints p { padding-left: 7px; line-height: 21.500px; letter-spacing: .14px; white-space: nowrap; }
.hints .in { padding-left: 12px; }
.values { display: flex; gap: 9px; height: 163px; }
.values .panel { flex: 1; }
.pose { display: grid; grid-template-columns: 114px 140px 101px 55px 126px; grid-template-rows: 34px 38px 38px; gap: 5px 0; align-items: center; padding: 4px 0 0 14px; }
.pose label { width: 98px; text-align: center; }
.pose .button { width: 100px; height: 34px; }
.pose .arrow { width: 76px; height: 39px; }
.arrow svg { width: 13px; height: 14px; }
.pose .field { width: 126px; height: 39px; }
.range { font-size: 14.500px; white-space: nowrap; -webkit-text-stroke: .3px #444; }
.range.second { grid-column: 3 / 6; padding-left: 90px; }
.button { display: flex; align-items: center; justify-content: center; border: 1.500px solid #bdbdbd; border-radius: 7px; background: #fdfdfd; color: #333; }
.help svg { width: 15px; height: 22px; margin-top: 6px; }
.help path { fill: none; stroke: #444; stroke-width: 5; stroke-linecap: round; }
.help .inner { stroke: #ccc; stroke-width: 2; }
.field { display: flex; align-items: center; justify-content: flex-end; padding-right: 7px; border: 1.500px solid #aaa; background: #fff; }
.tabs nav { display: flex; height: 37px; padding-bottom: 1px; background: #cfcfcf; }
.tab { display: flex; align-items: center; width: 113px; padding-left: 14px; font-size: 18px; }
.tab.active { width: 144px; padding-left: 13px; background: #f8f8f8; margin-bottom: -1px; }
.settings { display: grid; grid-template-columns: 110px 86px 164px 86px 165px 85px 165px 86px 164px; grid-template-rows: repeat(3, 30px); gap: 9px 0; padding: 8px 0 0 15px; }
.settings > * { height: 30px; }
.settings label { display: flex; align-items: center; justify-content: center; padding-right: 2px; }
.mark-box { position: absolute; left: 10px; top: 1096px; width: 1147px; height: 150px; border: 8px solid #cd3b33; }
.mark-ring { position: absolute; left: 107px; top: 1053px; width: 172px; height: 69px; border: 7.500px solid #cd3b33; border-radius: 50%; }
.mark-text { position: absolute; font: 36px/36px "Open Sans", sans-serif; color: #d2393d; }
.mark-text.first { left: 259px; top: 1023px; }
.mark-text.second { left: 866px; top: 1060px; }

.right { display: flex; flex-direction: column; width: 1264px; border-left: 1px solid #777; }
.viewer-model { height: 648px; padding: 2px 0 0 283px; background: #202020; }
.model { width: 711px; height: 646px; }
.frames path { fill: none; stroke: #9c9bb0; stroke-width: 3; }
.paper path { fill: #fff; }
.math text { font: italic 22px "Liberation Serif", "DejaVu Serif", serif; fill: #222; }
.math .s { font-size: 20px; }
.math path { fill: none; stroke: #333; stroke-width: 3; }
.wires path, path.wires { fill: none; stroke: #5d5b6e; stroke-width: 3; }
.wires .to path { marker-end: url(#tip); }
.glow rect { fill: #fff; stroke: #66484e; stroke-width: 3; filter: drop-shadow(0 0 7px rgba(226, 80, 96, .75)) drop-shadow(0 0 5px rgba(234, 110, 125, .5)); }
.blocks rect, .blocks path { fill: #fff; stroke: #555; stroke-width: 3; }
.names text { font-size: 15px; text-anchor: middle; fill: #333; }
.names .u { font: italic bold 22px "Liberation Serif", serif; }
.names .b { font-size: 17px; }
.notes text { font: 14px "Liberation Mono", monospace; fill: #222; }

.viewer-photo { height: 691px; border-top: 2px solid #5c5c5c; background: #1e1e1e; }
.toolbar { display: flex; align-items: center; height: 48px; padding-bottom: 1px; background: #1e1e1e; color: #eee; }
.gallery { display: flex; align-items: center; justify-content: center; width: 48px; height: 48px; background: #272727; }
.ico { width: 17px; height: 17px; fill: none; stroke: #e4e4e4; stroke-width: 1.200; overflow: visible; }
.file { width: 501px; padding-left: 19px; font: 13.500px "Open Sans", sans-serif; letter-spacing: -.7px; }
.tools, .zooms { display: flex; gap: 23.300px; }
.zooms { margin-left: 201px; }
.percent { width: 67px; margin-left: 23px; font: 14.500px "Open Sans", sans-serif; letter-spacing: -.7px; white-space: nowrap; }
.caption { width: 104px; height: 12px; margin: -15px 0 0 1px; fill: none; stroke: #777; }
.detail { width: 1254px; height: 641px; margin-left: 9px; }
.frame { fill: none; stroke: #b3b2c8; stroke-width: 1.600; }
.formula path { fill: none; stroke: #555; stroke-width: 2; }
.formula text { font: 28px "Liberation Serif", serif; fill: #444; }
.formula .i { font-style: italic; }
.formula .m { font-size: 31px; }
.formula .p { font-size: 34px; }
.formula .sub { font-size: 20px; }
.lines path { fill: none; stroke: #77768a; stroke-width: 1.500; }
.lines .into path { marker-end: url(#head); }
.halo rect { fill: #fff; stroke: #54404a; stroke-width: 2; filter: drop-shadow(0 0 3.500px rgba(224, 72, 90, .8)); }
.cards rect, .cards path { fill: #fff; stroke: #444; stroke-width: 1.700; filter: drop-shadow(1px 2px 1px rgba(60, 60, 80, .35)); }
.tags text { font-size: 17px; text-anchor: middle; fill: #333; }
.tags .plus text { font-size: 15px; }
.tags .pow text { font: italic bold 23px "Liberation Serif", serif; fill: #222; }
.tags .pow .e { font-size: 17px; font-style: normal; font-weight: 400; }
.tags .pow .sp { font-size: 18px; font-weight: 400; }
.pow .r { font-style: normal; }
.pow .v { font-size: 13px; }
marker path { fill: #111 !important; stroke: none !important; }
```
